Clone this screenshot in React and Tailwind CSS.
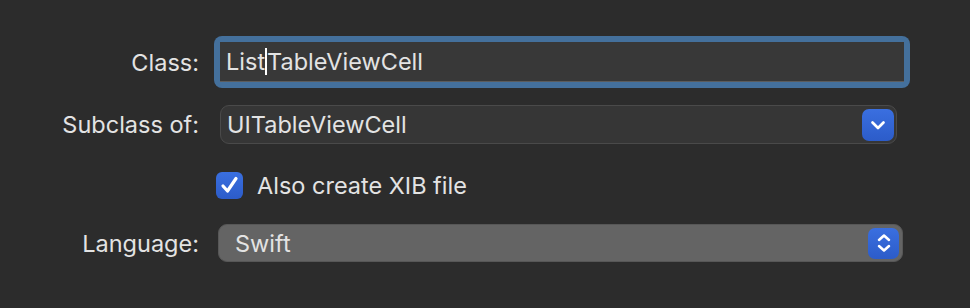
import React from 'react';

const font = { fontFamily: 'Inter, "Noto Sans", "Liberation Sans", sans-serif' };

// small chevron used in popup buttons
const ChevronDown = () => (
  <svg width="18" height="16" viewBox="0 0 18 16" fill="none">
    <path d="M3.5 5.5l5.5 5.5l5.5-5.5" stroke="#fff" strokeWidth="2.7" strokeLinecap="round" strokeLinejoin="round" />
  </svg>
);

const UpDown = () => (
  <svg width="18" height="24" viewBox="0 0 18 24" fill="none">
    <path d="M4 9L9 4.5L14 9" stroke="#fff" strokeWidth="2.5" strokeLinecap="round" strokeLinejoin="round" />
    <path d="M4 15L9 19.5L14 15" stroke="#fff" strokeWidth="2.5" strokeLinecap="round" strokeLinejoin="round" />
  </svg>
);

const Check = () => (
  <svg width="21" height="21" viewBox="0 0 21 21" fill="none">
    <path d="M4 11l4.5 5L17 3.5" stroke="#fff" strokeWidth="3.2" strokeLinecap="round" strokeLinejoin="round" />
  </svg>
);

export default function App() {
  return (
    <div className="w-[970px] h-[308px] bg-[#2c2c2c] text-[#e3e3e3] text-[23.5px] leading-[27px] pt-[36px] overflow-hidden" style={font}>
      {/* Class */}
      <div className="flex items-center">
        <div className="w-[199px] text-right">Class:</div>
        <div className="ml-[15px] w-[696px] h-[52px] p-[6px] bg-[#44709c] rounded-[8px]">
          <div className="h-full bg-[#383838] border-b border-[#5c5c5c] flex items-center pl-[6px]">
            <span>List</span>
            <span className="inline-block w-[2px] h-[27px] bg-white"></span>
            <span>TableViewCell</span>
          </div>
        </div>
      </div>

      {/* Subclass of */}
      <div className="flex items-center mt-[17px]">
        <div className="w-[199px] text-right">Subclass of:</div>
        <div className="ml-[21px] w-[677px] h-[39px] bg-[#363636] border border-[#4a4a4a] rounded-[9px] flex items-center justify-between pl-[6px] pr-[2px]">
          <span>UITableViewCell</span>
          <div className="w-[32px] h-[32px] rounded-[7px] bg-gradient-to-b from-[#3a6fe0] to-[#2c5cc9] flex items-center justify-center">
            <ChevronDown />
          </div>
        </div>
      </div>

      {/* checkbox */}
      <div className="flex items-center mt-[28px]">
        <div className="w-[199px]"></div>
        <div className="ml-[17px] w-[27px] h-[27px] rounded-[6px] bg-gradient-to-b from-[#3a6fe0] to-[#2c5cc9] flex items-center justify-center">
          <Check />
        </div>
        <span className="ml-[14px]">Also create XIB file</span>
      </div>

      {/* Language */}
      <div className="flex items-center mt-[25px]">
        <div className="w-[199px] text-right">Language:</div>
        <div className="ml-[19px] w-[685px] h-[38px] bg-[#646464] border border-[#575757] rounded-[9px] flex items-center justify-between pl-[16px] pr-[3px]">
          <span>Swift</span>
          <div className="w-[31px] h-[31px] rounded-[7px] bg-gradient-to-b from-[#3a6fe0] to-[#2c5cc9] flex items-center justify-center">
            <UpDown />
          </div>
        </div>
      </div>
    </div>
  );
}
